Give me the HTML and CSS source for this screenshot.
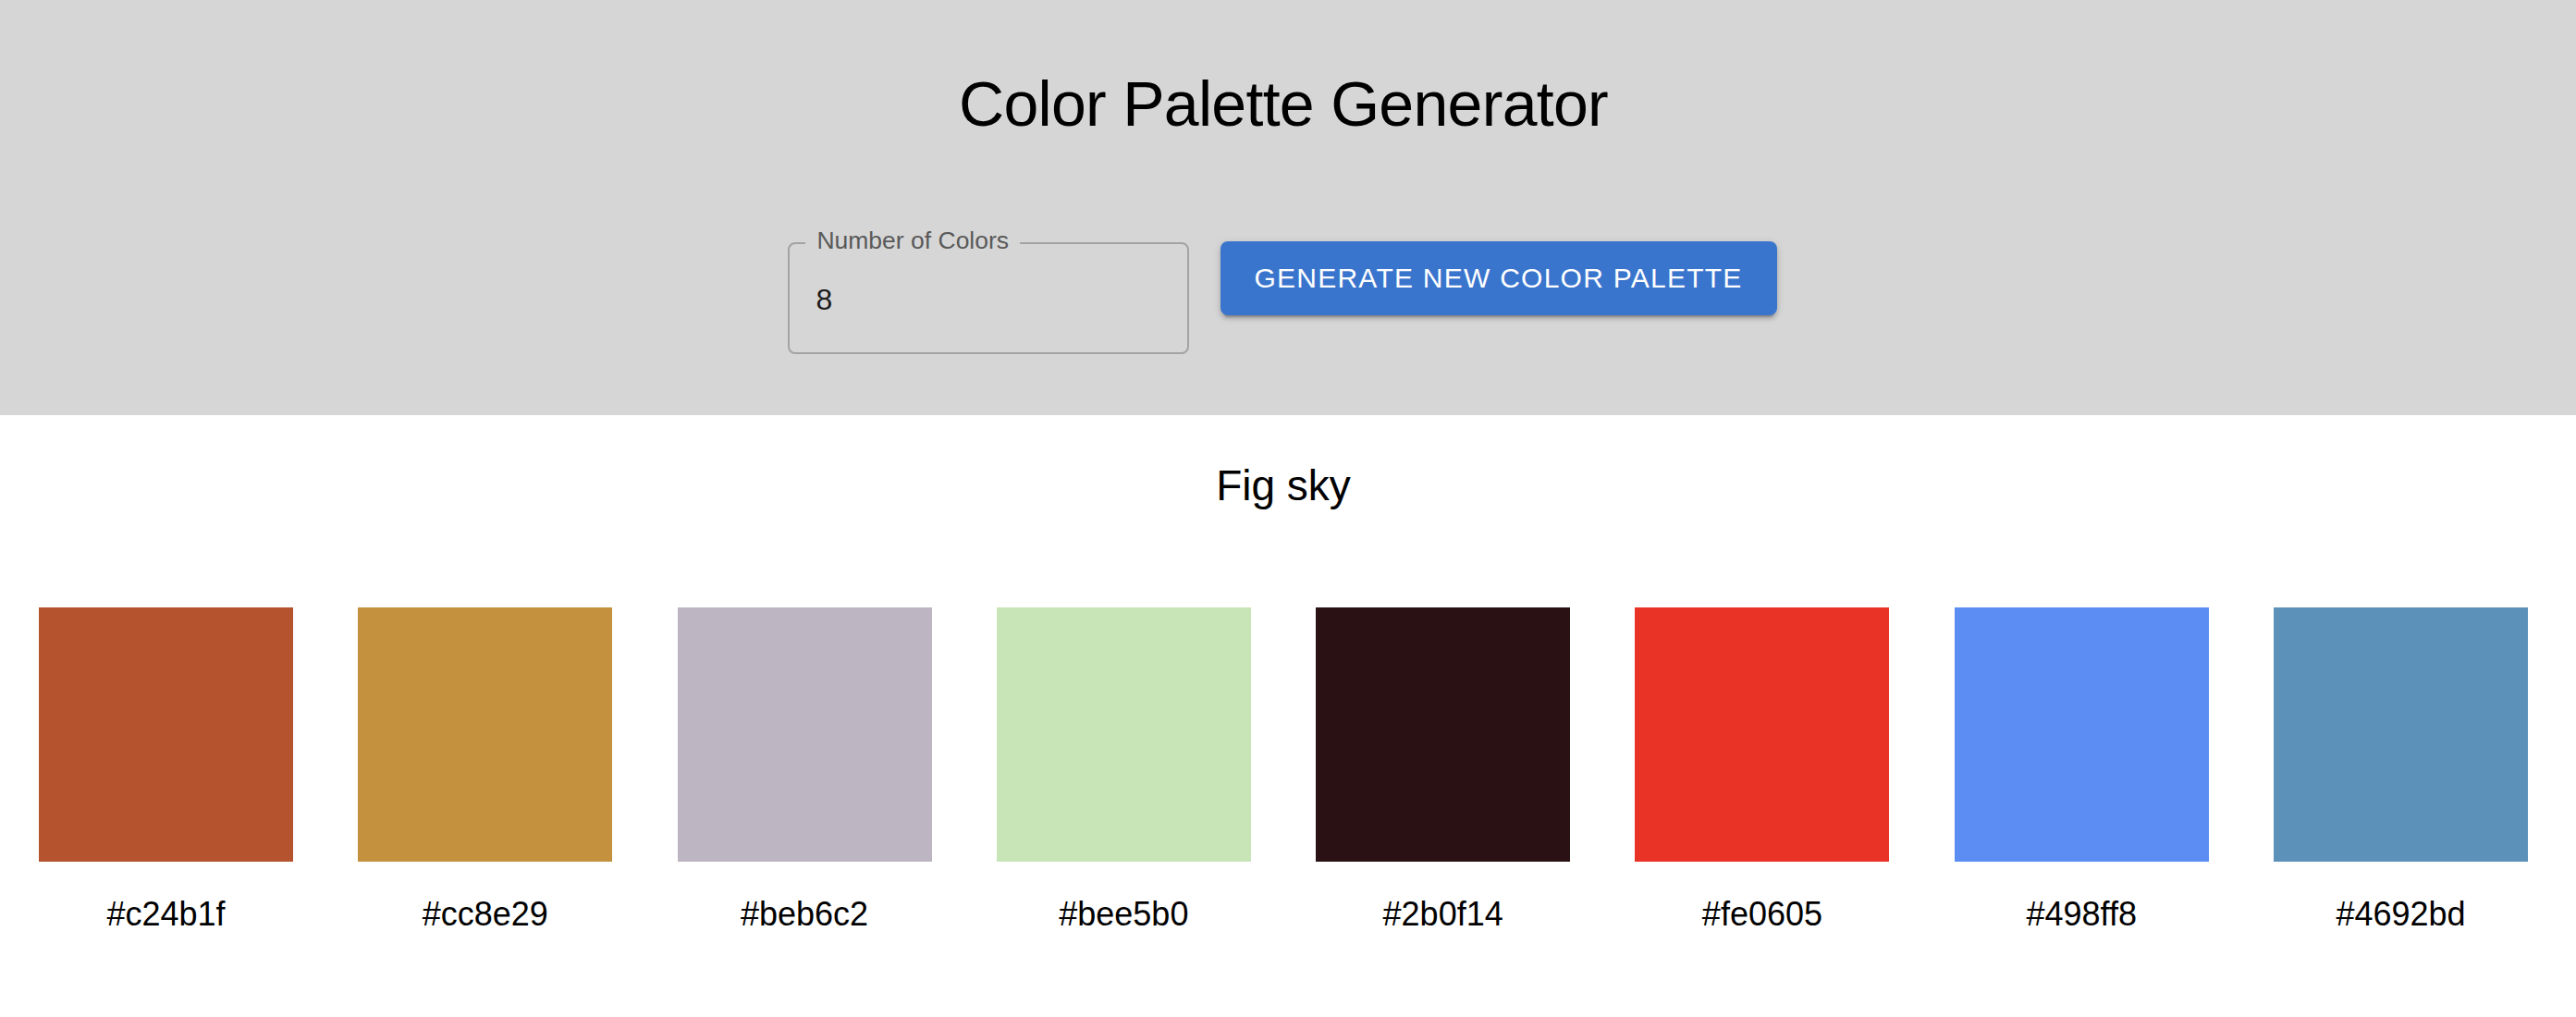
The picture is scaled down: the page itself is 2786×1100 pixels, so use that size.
FILE: index.html
```html
<!DOCTYPE html>
<html lang="en">
<head>
<meta charset="utf-8">
<title>Color Palette Generator</title>
<link rel="stylesheet" href="styles.css">
</head>
<body>
<div class="app">
  <header class="header">
    <h1 class="title">Color Palette Generator</h1>
    <div class="controls">
      <div class="field">
        <label class="field-label" for="count">Number of Colors</label>
        <div class="field-box">
          <input id="count" class="field-input" type="text" value="8">
        </div>
      </div>
      <button class="btn" type="button">Generate New Color Palette</button>
    </div>
  </header>
  <main class="palette">
    <h2 class="palette-name">Fig sky</h2>
    <div class="swatches">
      <div class="swatch"><div class="chip" style="background:#b5532f"></div><div class="hex">#c24b1f</div></div>
      <div class="swatch"><div class="chip" style="background:#c4913f"></div><div class="hex">#cc8e29</div></div>
      <div class="swatch"><div class="chip" style="background:#bdb5c1"></div><div class="hex">#beb6c2</div></div>
      <div class="swatch"><div class="chip" style="background:#c7e5b6"></div><div class="hex">#bee5b0</div></div>
      <div class="swatch"><div class="chip" style="background:#2a1114"></div><div class="hex">#2b0f14</div></div>
      <div class="swatch"><div class="chip" style="background:#e93326"></div><div class="hex">#fe0605</div></div>
      <div class="swatch"><div class="chip" style="background:#5b8df2"></div><div class="hex">#498ff8</div></div>
      <div class="swatch"><div class="chip" style="background:#5c91ba"></div><div class="hex">#4692bd</div></div>
    </div>
  </main>
</div>
</body>
</html>
```

FILE: styles.css
```css
* { box-sizing: border-box; }

html, body {
  margin: 0;
  padding: 0;
  background: #ffffff;
}

body {
  font-family: "Liberation Sans", Arial, Helvetica, sans-serif;
  color: #000000;
}

.app {
  width: 100%;
}

.header {
  background: #d6d6d6;
  padding: 72px 10px 66px 0;
  display: flex;
  flex-direction: column;
  align-items: center;
}

.title {
  margin: 0;
  font-size: 68px;
  line-height: 80px;
  font-weight: 400;
  letter-spacing: -0.7px;
  color: #000000;
}

.controls {
  margin-top: 109px;
  margin-right: 2px;
  display: flex;
  align-items: flex-start;
  gap: 34px;
}

.field {
  position: relative;
  width: 434px;
  margin-top: 1px;
}

.field-box {
  border: 2px solid #a3a3a3;
  border-radius: 8px;
  padding: 41px 20px 38px 28px;
}

.field-label {
  position: absolute;
  left: 19px;
  top: -17px;
  padding: 0 12px;
  background: #d6d6d6;
  font-size: 26.5px;
  line-height: 30px;
  color: #595959;
}

.field-input {
  display: block;
  width: 100%;
  height: 38px;
  margin: 0;
  padding: 0;
  border: 0;
  outline: none;
  background: transparent;
  font-family: "Liberation Sans", Arial, Helvetica, sans-serif;
  font-size: 32px;
  line-height: 38px;
  color: #1c1c1c;
}

.btn {
  margin: 0;
  border: 0;
  border-radius: 8px;
  padding: 20px 37px 20px 36px;
  background: #3a75cd;
  color: #ffffff;
  font-family: "Liberation Sans", Arial, Helvetica, sans-serif;
  font-size: 30px;
  line-height: 40px;
  letter-spacing: 1.25px;
  text-transform: uppercase;
  font-weight: 400;
  cursor: pointer;
  box-shadow: 0 6px 2px -4px rgba(0,0,0,0.2), 0 4px 4px 0 rgba(0,0,0,0.14), 0 2px 10px 0 rgba(0,0,0,0.12);
}

.palette {
  padding: 49px 10px 0 0;
  display: flex;
  flex-direction: column;
  align-items: center;
}

.palette-name {
  margin: 0;
  font-size: 46px;
  line-height: 54px;
  font-weight: 400;
}

.swatches {
  margin-top: 105px;
  display: flex;
  justify-content: center;
  gap: 70.3px;
}

.swatch {
  width: 275px;
  display: flex;
  flex-direction: column;
  align-items: center;
}

.chip {
  width: 275px;
  height: 275px;
}

.hex {
  margin-top: 37px;
  font-size: 36px;
  line-height: 40px;
  color: #000000;
}
```
